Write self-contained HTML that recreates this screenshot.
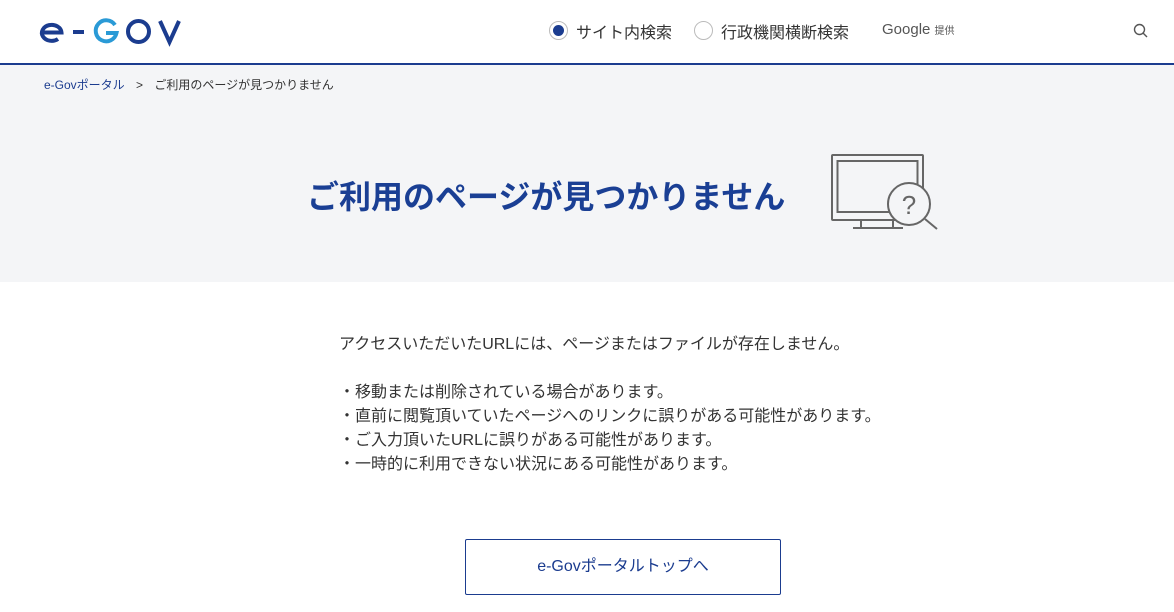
<!DOCTYPE html>
<html><head><meta charset="utf-8"><style>
*{margin:0;padding:0;box-sizing:border-box}
body{width:1174px;height:612px;overflow:hidden;background:#fff;font-family:"Liberation Sans","Noto Sans CJK JP",sans-serif;color:#333;position:relative}
.a{position:absolute;white-space:nowrap}
</style></head><body>
<svg class="a" style="left:36px;top:16px" width="150" height="32" viewBox="36 16 150 32" fill="none" stroke-width="4">
<path d="M42 32.5 H61.5 A9.8 8 0 1 0 58 39" stroke="#1b3c8f"/>
<line x1="73" y1="32" x2="84" y2="32" stroke="#1b3c8f"/>
<path d="M115 25 A10.5 10.5 0 1 0 116.5 33 H106" stroke="#2a9ad6"/>
<circle cx="138.5" cy="31.5" r="10.5" stroke="#1b3c8f"/>
<path d="M160 21 L169.5 42 L179 21" stroke="#1b3c8f"/>
</svg>
<div class="a" style="left:549px;top:21px;width:19px;height:19px;border:1px solid #bbb;border-radius:50%"><div style="margin:3px;width:11px;height:11px;border-radius:50%;background:#1b3c8f"></div></div>
<div class="a" style="left:576px;top:19px;font-size:16px;color:#333">サイト内検索</div>
<div class="a" style="left:694px;top:21px;width:19px;height:19px;border:1px solid #bbb;border-radius:50%"></div>
<div class="a" style="left:721px;top:19px;font-size:16px;color:#333">行政機関横断検索</div>
<div class="a" style="left:882px;top:21px;font-size:15px;color:#555">Google <span style="font-size:10px">提供</span></div>
<svg class="a" style="left:1133px;top:23px" width="16" height="16" viewBox="0 0 16 16"><circle cx="6.5" cy="6.5" r="5" fill="none" stroke="#555" stroke-width="1.4"/><line x1="10" y1="10" x2="14" y2="14" stroke="#555" stroke-width="1.4"/></svg>
<div class="a" style="left:0;top:63px;width:1174px;height:2px;background:#1b3c8f"></div>
<div class="a" style="left:0;top:65px;width:1174px;height:217px;background:#f4f5f7"></div>
<div class="a" style="left:44px;top:76px;font-size:12px;color:#1b3c8f">e-Govポータル <span style="color:#333;margin:0 8px">&gt;</span> <span style="color:#333">ご利用のページが見つかりません</span></div>
<div class="a" style="left:307px;top:172px;font-size:32px;font-weight:bold;color:#1a3f94">ご利用のページが見つかりません</div>
<svg class="a" style="left:820px;top:145px" width="130" height="95" viewBox="820 145 130 95" fill="none" stroke="#666" stroke-width="2">
<rect x="832" y="155" width="91" height="65" rx="1"/><rect x="837.5" y="161" width="80" height="51"/>
<line x1="861" y1="221" x2="861" y2="228"/><line x1="893" y1="221" x2="893" y2="228"/><line x1="853" y1="228" x2="903" y2="228"/>
<circle cx="909" cy="204" r="21" fill="#f4f5f7"/><line x1="925" y1="219" x2="937" y2="229"/>
<text x="909" y="214" font-size="26" fill="#666" stroke="none" text-anchor="middle" font-family="Liberation Sans">?</text>
</svg>
<div class="a" style="left:339px;top:333px;font-size:16px;line-height:24px;color:#333">アクセスいただいたURLには、ページまたはファイルが存在しません。<br><br>・移動または削除されている場合があります。<br>・直前に閲覧頂いていたページへのリンクに誤りがある可能性があります。<br>・ご入力頂いたURLに誤りがある可能性があります。<br>・一時的に利用できない状況にある可能性があります。</div>
<div class="a" style="left:465px;top:539px;width:316px;height:56px;border:1px solid #1b3c8f;border-radius:2px;font-size:16px;color:#1b3c8f;text-align:center;line-height:54px">e-Govポータルトップへ</div>
</body></html>
